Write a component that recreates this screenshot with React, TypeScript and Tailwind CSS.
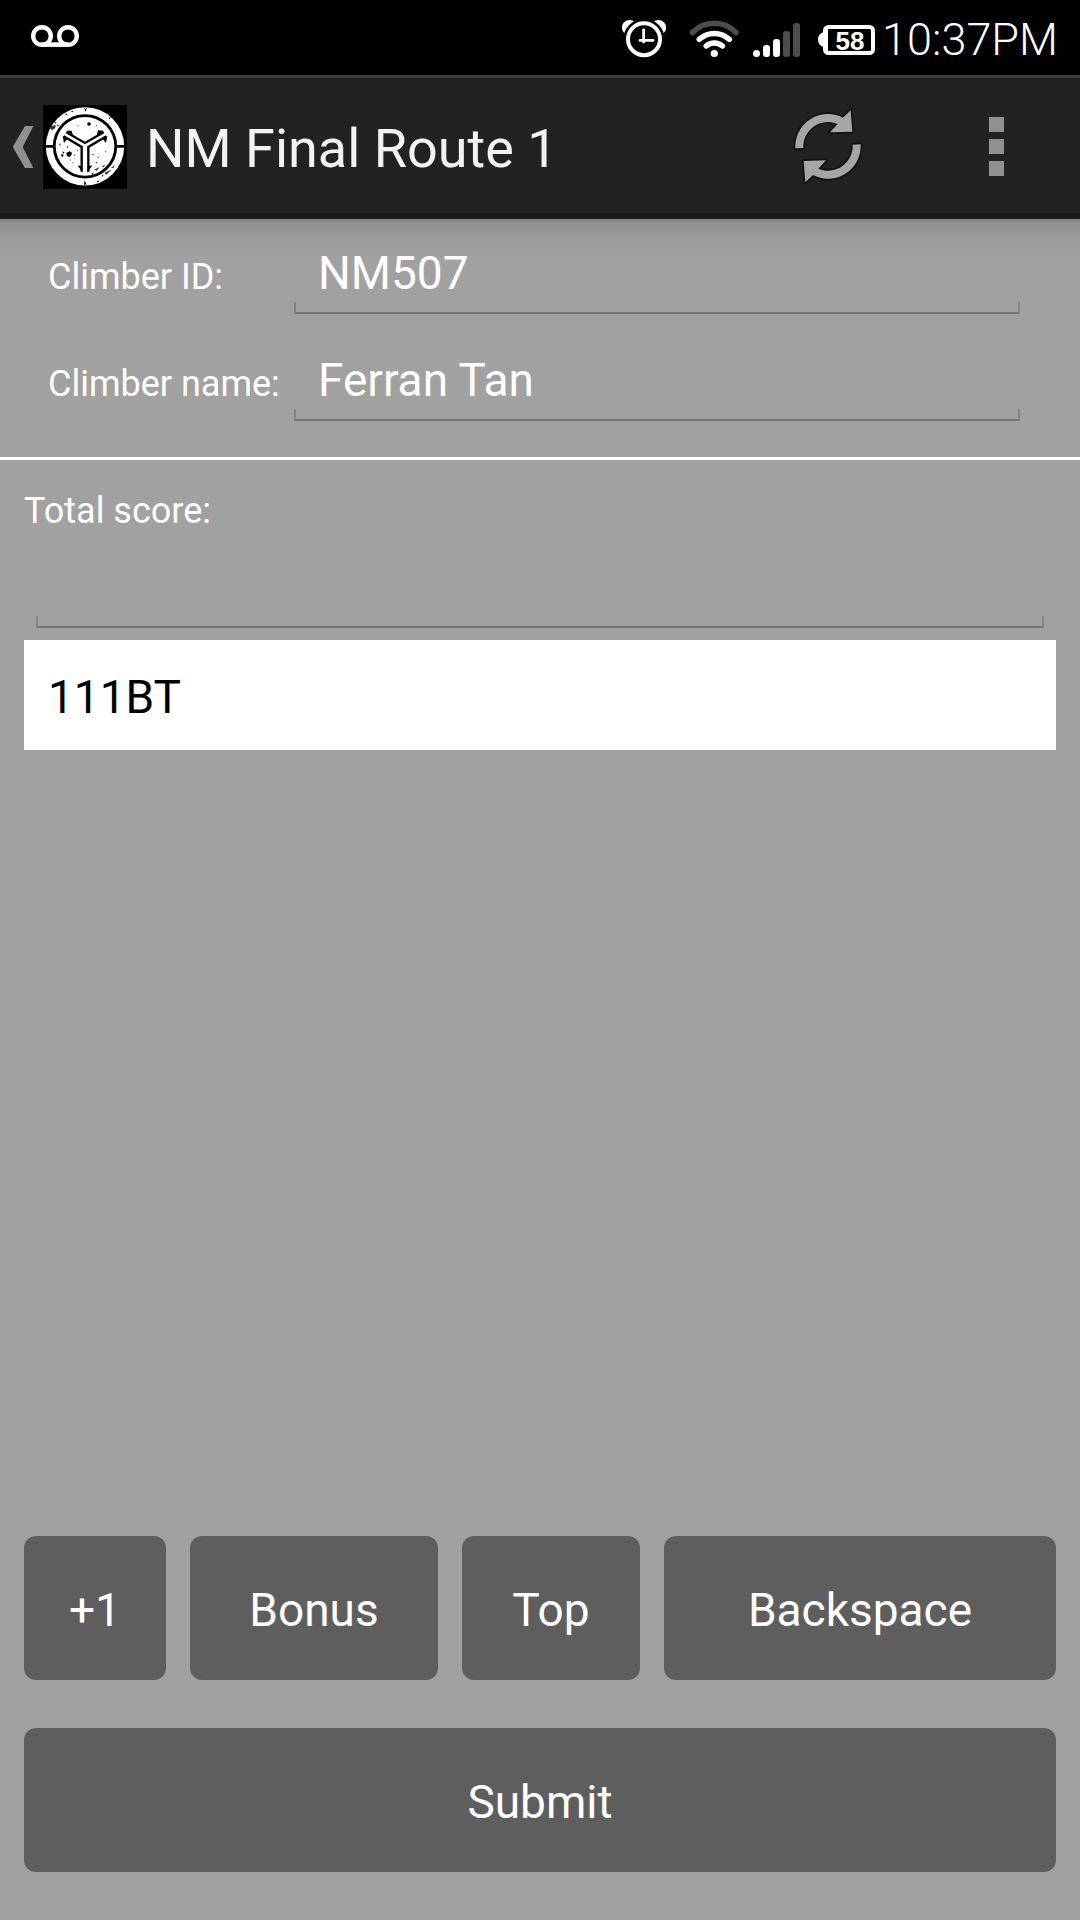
import { useState } from "react";
import type { ReactNode } from "react";

function StatusBar() {
  return (
    <div className="flex h-[75px] items-center bg-black pr-[22px] pl-[31px] text-white">
      <svg className="h-[75px] w-12" viewBox="31 0 48 75" fill="none" stroke="white" aria-label="Voicemail">
        <circle cx="42" cy="36" r="8.8" strokeWidth="4.4" />
        <circle cx="68" cy="36" r="8.8" strokeWidth="4.4" />
        <path d="M42 44.6H68" strokeWidth="4.6" />
      </svg>
      <div className="ml-auto flex items-center">
        <svg className="h-[75px] w-11" viewBox="622 0 44 75" aria-label="Alarm set">
          <circle cx="629.5" cy="27.5" r="7.6" fill="white" />
          <circle cx="658.5" cy="27.5" r="7.6" fill="white" />
          <circle cx="644" cy="39.2" r="20.6" fill="black" />
          <circle cx="644" cy="39.2" r="16" fill="none" stroke="white" strokeWidth="4" />
          <path d="M643.6 30V42M640 40.4H653" fill="none" stroke="white" strokeWidth="2.8" strokeLinecap="round" />
        </svg>
        <svg className="ml-6 h-[75px] w-[49px]" viewBox="690 0 49 75" fill="none" strokeLinecap="round" aria-label="Wi-Fi">
          <path d="M692.5 32.5A30 30 0 0 1 736 32.5" stroke="#4d4d4d" strokeWidth="5.500" />
          <path d="M699.3 39.3A22 22 0 0 1 729.3 39.3" stroke="white" strokeWidth="5.500" />
          <path d="M706.2 46A12.5 12.5 0 0 1 722.4 46" stroke="white" strokeWidth="5.500" />
          <circle cx="714.3" cy="53.5" r="3.6" fill="white" />
        </svg>
        <svg className="ml-3.5 h-[75px] w-12" viewBox="753 0 48 75" fill="white" aria-label="Signal">
          <rect x="753" y="50" width="7" height="7" rx="3.5" />
          <rect x="763" y="45" width="7" height="12" rx="3" />
          <rect x="773" y="39" width="7" height="18" rx="3" />
          <rect x="783" y="31" width="7" height="26" rx="3" fill="#4d4d4d" />
          <rect x="793" y="23" width="7" height="34" rx="3" fill="#4d4d4d" />
        </svg>
        <svg className="ml-[17px] h-[75px] w-[57px]" viewBox="818 0 57 75" aria-label="Battery 58%">
          <path d="M826 32H824C820 33 818 35.500 818 39.500S820 46 824 47H826Z" fill="white" />
          <rect x="825" y="27" width="48" height="26" rx="3.5" fill="none" stroke="white" strokeWidth="4" />
          <path d="M826 28V52" stroke="white" strokeWidth="4" />
          <text x="850" y="49.500" textAnchor="middle" fill="white" className="font-['Liberation_Sans',sans-serif] text-[26px] font-bold">
            58
          </text>
        </svg>
        <span className="ml-[7px] pt-1 text-[45px] leading-none font-light">10:37PM</span>
      </div>
    </div>
  );
}

function Logo() {
  return (
    <svg className="size-[84px]" viewBox="0 0 252 252" aria-label="Home">
      <rect width="252" height="252" fill="black" />
      <circle cx="126" cy="124" r="107" fill="none" stroke="white" strokeWidth="21" />
      <circle cx="126" cy="124" r="88" fill="white" />
      <path d="M0 124H32M220 124H252" stroke="black" strokeWidth="8" />
      <g fill="none" stroke="black" strokeWidth="7">
        <path d="M70 82L126 114L182 82" />
        <path d="M62 94L116 126V200" />
        <path d="M190 94L136 126V200" />
      </g>
      <path d="M70 77L86 77L90 93L78 88ZM182 77L165 76L161 93L174 88ZM59 92L63 114L73 102ZM193 92L189 114L179 102ZM119 203L104 181L116 184ZM133 203L148 181L136 184Z" fill="black" />
      <g fill="black">
        <circle cx="138" cy="57" r="5.500" />
        <path d="M70 144L80 139L87 143L85 151L78 157L71 151ZM58 138L65 143L60 146ZM54 149L58 146L62 153L57 156ZM49 120L51 114L53 122Z" />
        <path d="M25 63L38 60L37 68L28 76L22 71ZM42 58L49 61L44 65ZM34 50L41 52L37 56Z" fillOpacity="0.8" />
        <path d="M82 20L91 17L89 22ZM122 7L127 13L132 6L128 20ZM66 29L72 25L71 31ZM196 39L203 36L200 43ZM125 226L131 240L127 238L123 241ZM160 229L170 226L165 232Z" />
        <path d="M184 203L206 194L190 209ZM204 188L216 180L211 189ZM176 212L182 208L180 215ZM155 193L170 187L160 198ZM176 184L188 179L181 187ZM144 207L152 202L150 209ZM79 164L84 163L82 168ZM92 151L96 148L95 154ZM102 133L105 137L101 138Z" fillOpacity="0.8" />
        <circle cx="150" cy="149" r="1.800" />
        <circle cx="166" cy="157" r="1.500" />
        <circle cx="160" cy="173" r="2" />
        <circle cx="188" cy="140" r="1.500" />
        <circle cx="105" cy="62" r="1.500" />
        <circle cx="90" cy="173" r="1.500" />
        <circle cx="161" cy="62" r="1.500" />
        <circle cx="73" cy="126" r="2" />
      </g>
    </svg>
  );
}

const arrow = "M108 208A98 98 0 0 1 251 116L274 94L279 158L212 160L235 135A74 74 0 0 0 132 207Z";

function ActionBar() {
  return (
    <header className="flex h-36 items-center border-t-[3px] border-b-[6px] border-t-[#3b3b3b] border-b-[#1a1a1a] bg-[#222222] pt-0.5">
      <button type="button" aria-label="Back" className="flex items-center pl-3">
        <svg className="h-[42px] w-[31px]" viewBox="12 0 31 42" aria-hidden="true">
          <path d="M25 0H33.400L22.700 21L33.400 42H25L12.700 21Z" fill="#909090" />
        </svg>
        <Logo />
      </button>
      <h1 className="ml-[19px] flex-1 pt-1 text-[54px] leading-none whitespace-nowrap text-[#f3f3f3]">NM Final Route 1</h1>
      <button type="button" aria-label="Refresh" className="flex w-[168px] justify-center">
        <svg className="h-[79px] w-[72px]" viewBox="98 84 216 237" aria-hidden="true">
          <g fill="#a6a6a6" stroke="#141414" strokeWidth="12" strokeLinejoin="round" className="[paint-order:stroke]">
            <path d={arrow} />
            <path d={arrow} transform="rotate(180 206 202)" />
          </g>
        </svg>
      </button>
      <button type="button" aria-label="More options" className="flex w-[168px] flex-col items-center gap-[7px]">
        <span className="size-[15px] bg-[#909090]" />
        <span className="size-[15px] bg-[#909090]" />
        <span className="size-[15px] bg-[#909090]" />
      </button>
    </header>
  );
}

type FieldProps = { id: string; value: string; onChange: (v: string) => void };

function Field({ id, value, onChange }: FieldProps) {
  return (
    <div className="relative flex-1">
      <input
        id={id}
        value={value}
        onChange={(e) => onChange(e.target.value)}
        className="block h-[72px] w-full bg-transparent px-6 pt-[3px] pb-[13px] text-[46px] leading-[56px] text-white outline-none"
      />
      <span className="pointer-events-none absolute inset-x-0 bottom-0 h-3 border-x-2 border-b-2 border-x-[#848484] border-b-[#747474]" />
    </div>
  );
}

function Key({ children, onClick }: { children: ReactNode; onClick?: () => void }) {
  return (
    <button type="button" onClick={onClick} className="h-36 w-full rounded-xl bg-[#5e5e5e] pt-1 text-[46px] text-white">
      {children}
    </button>
  );
}

export default function App() {
  const [climberId, setClimberId] = useState("NM507");
  const [climberName, setClimberName] = useState("Ferran Tan");
  const [total, setTotal] = useState("");
  const [score, setScore] = useState("111BT");

  return (
    <div className="flex min-h-screen flex-col bg-[#a1a1a1] font-[Roboto,sans-serif] text-white">
      <StatusBar />
      <ActionBar />
      <main className="flex flex-1 flex-col bg-[linear-gradient(#868686_0_3px,#919191_3px,#9b9b9b_20px,#a1a1a1_40px)]">
        <section className="flex flex-col gap-[35px] border-b-[3px] border-white pt-[23px] pr-[60px] pb-9 pl-12">
          <div className="flex items-baseline">
            <label htmlFor="climber-id" className="w-[246px] text-4xl whitespace-nowrap">Climber ID:</label>
            <Field id="climber-id" value={climberId} onChange={setClimberId} />
          </div>
          <div className="flex items-baseline">
            <label htmlFor="climber-name" className="w-[246px] text-4xl whitespace-nowrap">Climber name:</label>
            <Field id="climber-name" value={climberName} onChange={setClimberName} />
          </div>
        </section>
        <section className="px-6 pt-[30px]">
          <label htmlFor="total" className="block text-4xl leading-[42px]">Total score:</label>
          <div className="mt-6 flex px-3">
            <Field id="total" value={total} onChange={setTotal} />
          </div>
          <output className="mt-3 flex h-[110px] items-center bg-white px-6 pt-1 text-[46px] text-black">{score}</output>
        </section>
        <section className="mt-auto flex flex-col gap-12 px-6 pb-12">
          <div className="grid grid-cols-[142fr_248fr_178fr_392fr] gap-6">
            <Key onClick={() => setScore(score + "1")}>+1</Key>
            <Key onClick={() => setScore(score + "B")}>Bonus</Key>
            <Key onClick={() => setScore(score + "T")}>Top</Key>
            <Key onClick={() => setScore(score.slice(0, -1))}>Backspace</Key>
          </div>
          <Key>Submit</Key>
        </section>
      </main>
    </div>
  );
}
